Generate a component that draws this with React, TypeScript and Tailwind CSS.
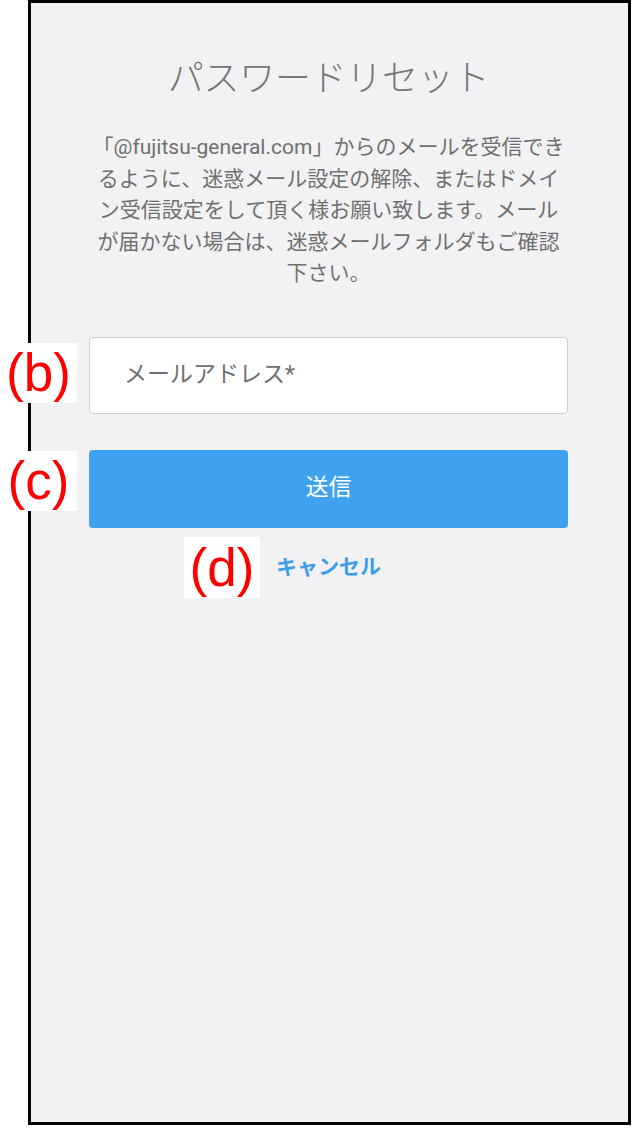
export default function App() {
  const jp = { fontFamily: 'Roboto, "Noto Sans CJK JP", sans-serif' };
  return (
    <div className="relative w-[633px] h-[1128px] bg-white" style={jp}>
      <div className="ml-[28px] w-[603px] h-[1125px] border-[3px] border-black bg-[#f2f2f4] flex flex-col items-center pr-[2px]">
        <h1 className="mt-[50px] text-[36px] leading-[52px] text-[#767676] font-light tracking-[-0.3px]">
          パスワードリセット
        </h1>
        <p className="mt-[27px] w-[479px] text-center text-[21px] leading-[31.5px] text-[#707070]">
          「@fujitsu-general.com」からのメールを受信できるように、迷惑メール設定の解除、またはドメイン受信設定をして頂く様お願い致します。メールが届かない場合は、迷惑メールフォルダもご確認下さい。
        </p>
        <div className="mt-[47px] w-[479px] h-[77px] bg-white border border-[#cdcdd1] rounded-[4px] flex items-center pl-[34px]">
          <span className="text-[23px] text-[#707070]">メールアドレス*</span>
        </div>
        <button className="mt-[36px] w-[479px] h-[78px] bg-[#3fa2ef] rounded-[4px] flex items-center justify-center text-white text-[23px]">
          送信
        </button>
        <a className="mt-[24px] text-[21px] leading-[30px] font-bold text-[#3d9eea]">キャンセル</a>
      </div>
      <div
        className="absolute left-0 top-[343px] w-[77px] h-[60px] bg-white text-[#ff0000] text-[53px] leading-[60px] text-center"
        style={{ fontFamily: '"Liberation Sans", Arial, sans-serif' }}
      >
        (b)
      </div>
      <div
        className="absolute left-0 top-[451px] w-[77px] h-[60px] bg-white text-[#ff0000] text-[53px] leading-[60px] text-center"
        style={{ fontFamily: '"Liberation Sans", Arial, sans-serif' }}
      >
        (c)
      </div>
      <div
        className="absolute left-[184px] top-[537px] w-[76px] h-[61px] bg-white text-[#ff0000] text-[53px] leading-[61px] text-center"
        style={{ fontFamily: '"Liberation Sans", Arial, sans-serif' }}
      >
        (d)
      </div>
    </div>
  );
}
